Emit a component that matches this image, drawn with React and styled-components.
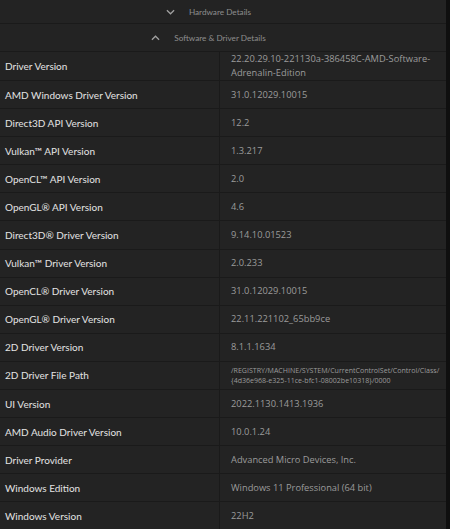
import React from "react";
import styled, { createGlobalStyle } from "styled-components";

const GlobalStyle = createGlobalStyle`
  html, body {
    margin: 0;
    padding: 0;
    background: #111111;
    overflow: hidden;
  }
  * {
    box-sizing: border-box;
  }
`;

const rows = [
  ["Driver Version", "22.20.29.10-221130a-386458C-AMD-Software-\nAdrenalin-Edition"],
  ["AMD Windows Driver Version", "31.0.12029.10015"],
  ["Direct3D API Version", "12.2"],
  ["Vulkan™ API Version", "1.3.217"],
  ["OpenCL™ API Version", "2.0"],
  ["OpenGL® API Version", "4.6"],
  ["Direct3D® Driver Version", "9.14.10.01523"],
  ["Vulkan™ Driver Version", "2.0.233"],
  ["OpenCL® Driver Version", "31.0.12029.10015"],
  ["OpenGL® Driver Version", "22.11.221102_65bb9ce"],
  ["2D Driver Version", "8.1.1.1634"],
  ["2D Driver File Path", "/REGISTRY/MACHINE/SYSTEM/CurrentControlSet/Control/Class/\n{4d36e968-e325-11ce-bfc1-08002be10318}/0000", true],
  ["UI Version", "2022.1130.1413.1936"],
  ["AMD Audio Driver Version", "10.0.1.24"],
  ["Driver Provider", "Advanced Micro Devices, Inc."],
  ["Windows Edition", "Windows 11 Professional (64 bit)"],
  ["Windows Version", "22H2"],
];

export default function App() {
  return (
    <>
      <GlobalStyle />
      <Page>
        <Panel>
          <SectionHeader $height={24}>
            <Chevron viewBox="0 0 10 6">
              <path d="M1 1 L5 5 L9 1" />
            </Chevron>
            <span>Hardware Details</span>
          </SectionHeader>
          <SectionHeader $height={28}>
            <Chevron viewBox="0 0 10 6">
              <path d="M1 5 L5 1 L9 5" />
            </Chevron>
            <span>Software &amp; Driver Details</span>
          </SectionHeader>
          <Table>
            {rows.map(([label, value, small]) => (
              <Row key={label}>
                <Label>{label}</Label>
                <Value $small={small}>{value}</Value>
              </Row>
            ))}
          </Table>
        </Panel>
        <Scrollbar />
      </Page>
    </>
  );
}

const Page = styled.div`
  width: 450px;
  height: 529px;
  display: flex;
  overflow: hidden;
  font-family: Lato, "Open Sans", sans-serif;
`;

const Panel = styled.div`
  width: 446px;
  flex-shrink: 0;
  background: #232323;
  display: flex;
  flex-direction: column;
`;

const Scrollbar = styled.div`
  width: 4px;
  flex-shrink: 0;
  background: #0f0f0f;
`;

const SectionHeader = styled.div`
  flex-shrink: 0;
  height: ${(p) => p.$height}px;
  border-bottom: 1px solid #1a1a1a;
  display: grid;
  grid-template-columns: 1fr auto 1fr;
  align-items: center;
  padding-right: 6px;
  color: #8e8e8e;
  font-size: 8.2px;
  span {
    grid-column: 2;
  }
`;

const Chevron = styled.svg`
  grid-column: 1;
  justify-self: end;
  margin-right: 14px;
  width: 9px;
  height: 6px;
  fill: none;
  stroke: #a0a0a0;
  stroke-width: 1.4;
`;

const Table = styled.div`
  flex-shrink: 0;
  display: flex;
  flex-direction: column;
`;

const Row = styled.div`
  display: grid;
  grid-template-columns: 220px 1fr;
  min-height: 28.1px;
  border-bottom: 1px solid #1a1a1a;
`;

const Label = styled.div`
  display: flex;
  align-items: center;
  padding-left: 5px;
  color: #e4e4e4;
  font-size: 10px;
  border-right: 1px solid #1a1a1a;
`;

const Value = styled.div`
  display: flex;
  align-items: center;
  padding: 0 2px 0 11px;
  color: #9b9b9b;
  font-family: "Open Sans", sans-serif;
  font-size: ${(p) => (p.$small ? "7.05px" : "9.3px")};
  line-height: ${(p) => (p.$small ? "10px" : "14px")};
  white-space: pre-line;
`;
